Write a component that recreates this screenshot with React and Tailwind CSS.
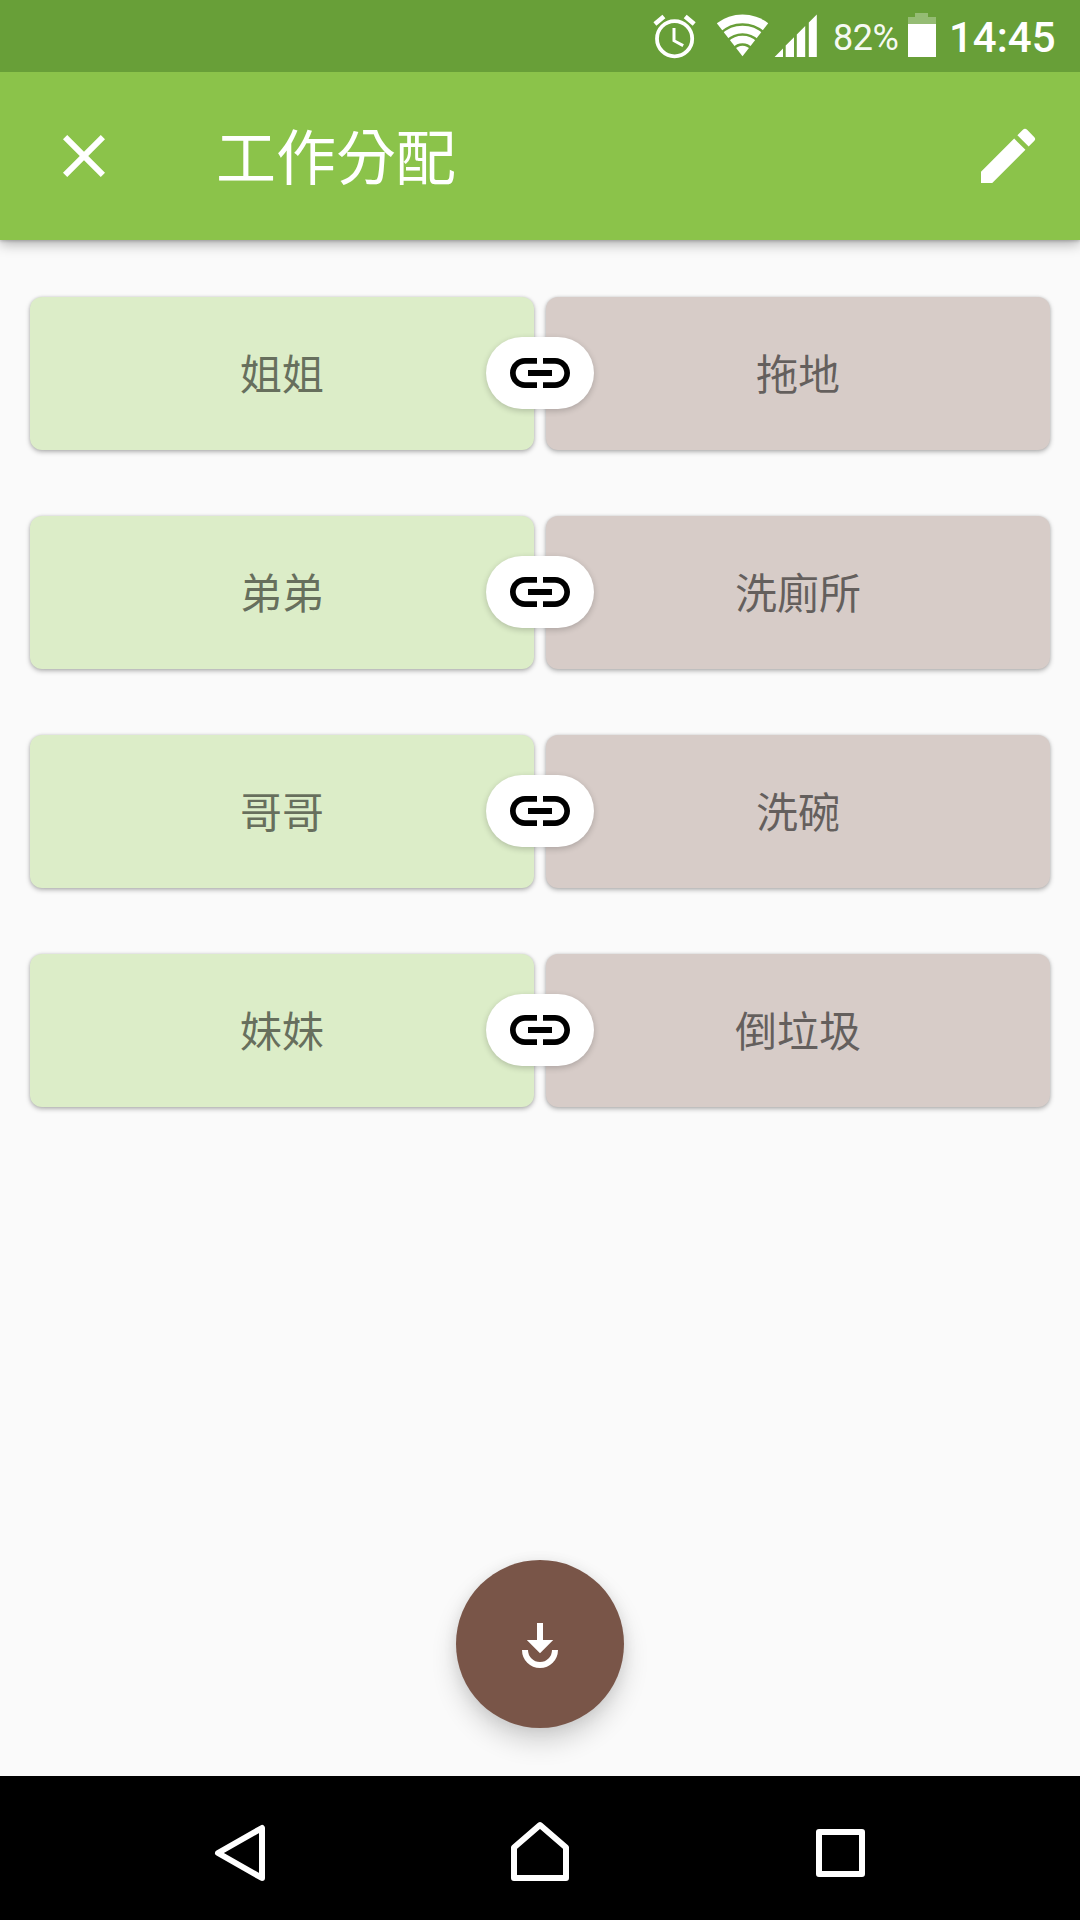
const ASSIGNMENTS = [
  { person: '姐姐', chore: '拖地' },
  { person: '弟弟', chore: '洗廁所' },
  { person: '哥哥', chore: '洗碗' },
  { person: '妹妹', chore: '倒垃圾' },
];

// 24-unit glyphs drawn at 72px
const ICONS = {
  close: 'M19 6.41L17.59 5 12 10.59 6.41 5 5 6.41 10.59 12 5 17.59 6.41 19 12 13.41 17.59 19 19 17.59 13.41 12z',
  edit: 'M3 17.25V21h3.75L17.81 9.94l-3.75-3.75L3 17.25zM20.71 7.04a.996.996 0 0 0 0-1.41l-2.34-2.34a.996.996 0 0 0-1.41 0l-1.83 1.83 3.75 3.75 1.83-1.83z',
  link: 'M3.9 12c0-1.71 1.39-3.1 3.1-3.1h4V7H7c-2.76 0-5 2.24-5 5s2.24 5 5 5h4v-1.9H7c-1.71 0-3.1-1.39-3.1-3.1zM8 13h8v-2H8v2zm9-6h-4v1.9h4c1.71 0 3.1 1.39 3.1 3.1s-1.39 3.1-3.1 3.1h-4V17h4c2.76 0 5-2.24 5-5s-2.24-5-5-5z',
  receive: 'M11 5h2v5.65h3.4L12 15.1 7.6 10.65H11zM6 14h2a4 4 0 0 0 8 0h2a6 6 0 0 1-12 0z',
};

function Icon({ d, className = '' }) {
  return (
    <svg viewBox="0 0 24 24" className={`w-[72px] h-[72px] shrink-0 ${className}`} fill="currentColor">
      <path d={d} />
    </svg>
  );
}

function AlarmIcon() {
  return (
    <svg width="48" height="72" viewBox="0 0 48 72" fill="none" stroke="white">
      <circle cx="24.6" cy="38.7" r="17.6" strokeWidth="3.8" />
      <path d="M24 28v12.7l9.2 4.9" strokeWidth="3" />
      <path d="M4.9 23.9l9-7.5M35.2 16.4l9 7.5" strokeWidth="4.6" />
    </svg>
  );
}

function WifiIcon() {
  return (
    <svg width="56" height="72" viewBox="0 0 56 72" fill="none">
      <path d="M28.5 56.3L2.8 23.3A42.3 42.3 0 0 1 54.2 23.3z" fill="white" />
      <g className="stroke-[#689f38]" strokeWidth="2.6">
        <path d="M6.5 33.3A31.8 31.8 0 0 1 50.5 33.3" />
        <path d="M13.3 40.7A21.6 21.6 0 0 1 43.7 40.7" />
        <path d="M19.8 48.5A11.5 11.5 0 0 1 37.2 48.5" />
      </g>
    </svg>
  );
}

function SignalIcon() {
  return (
    <svg width="44" height="72" viewBox="0 0 44 72" fill="white">
      <path d="M.6 57l8.4-8.4v8.4zM11.7 57V45.5l8.3-8.3v19.8zM22.8 57V34.4l8.4-8.4V57zM34.8 57V22.4l8-8v42.6z" />
    </svg>
  );
}

function BatteryIcon() {
  return (
    <svg width="28" height="72" viewBox="0 0 28 72" fill="white">
      <path d="M0 17h7v-4h13v4h8v7H0z" fillOpacity=".3" />
      <path d="M0 24h28v33H0z" />
    </svg>
  );
}

function StatusBar() {
  return (
    <div className="relative z-10 h-[72px] shrink-0 flex items-center justify-end bg-[#689f38] pr-[26px] text-white font-[Roboto,sans-serif]">
      <AlarmIcon />
      <div className="ml-4"><WifiIcon /></div>
      <div className="ml-1"><SignalIcon /></div>
      <span className="ml-[15px] w-[75px] text-[36px] leading-none pt-[3px] text-white/95 tracking-[-0.5px]">82%</span>
      <BatteryIcon />
      <span className="ml-[13px] w-[105px] text-[42px] leading-none font-medium pt-[3px] whitespace-nowrap">14:45</span>
    </div>
  );
}

function AppBar() {
  return (
    <header className="relative h-[168px] shrink-0 flex items-center bg-[#8bc34a] px-9 text-white shadow-[0_4px_12px_rgba(0,0,0,0.3),0_1px_3px_rgba(0,0,0,0.2)]">
      <button className="ml-3"><Icon d={ICONS.close} /></button>
      <h1 className="ml-24 flex-1 text-[60px] leading-none pb-[5px]">工作分配</h1>
      <button><Icon d={ICONS.edit} /></button>
    </header>
  );
}

function Card({ className, children }) {
  return (
    <div className={`flex-1 flex items-center justify-center pb-1 rounded-[12px] text-[42px] leading-none text-black/54 shadow-[0_2px_5px_rgba(0,0,0,0.28),0_0_3px_rgba(0,0,0,0.12)] ${className}`}>
      {children}
    </div>
  );
}

function AssignmentRow({ person, chore }) {
  return (
    <div className="relative flex gap-3 h-[153px]">
      <Card className="bg-[#dcedc8]">{person}</Card>
      <Card className="bg-[#d7ccc8]">{chore}</Card>
      <div className="absolute left-1/2 top-10 -translate-x-1/2 px-[18px] rounded-full bg-white text-black shadow-[0_2px_6px_rgba(0,0,0,0.2)]">
        <Icon d={ICONS.link} />
      </div>
    </div>
  );
}

function NavBar() {
  return (
    <nav className="h-[144px] shrink-0 flex items-center bg-black px-[90px]">
      {[
        'M14 41L58 16V66z',
        'M10 35.5L36 13L62 35.5V66H10z',
        'M15 20H58V62H15z',
      ].map(d => (
        <button key={d} className="flex-1 flex justify-center">
          <svg width="72" height="72" viewBox="0 0 72 72" fill="none" stroke="white" strokeWidth="6" strokeLinejoin="round">
            <path d={d} />
          </svg>
        </button>
      ))}
    </nav>
  );
}

export default function App() {
  return (
    <div className="w-[1080px] h-[1920px] flex flex-col overflow-hidden bg-[#fafafa] font-['Noto_Sans_CJK_TC',sans-serif]">
      <StatusBar />
      <AppBar />
      <main className="flex-1 flex flex-col px-[30px] pt-[57px] pb-12">
        <div className="flex flex-col gap-[66px]">
          {ASSIGNMENTS.map(a => <AssignmentRow key={a.person} {...a} />)}
        </div>
        <button className="mt-auto self-center w-[168px] h-[168px] flex items-center justify-center rounded-full bg-[#795548] text-white shadow-[0_14px_26px_rgba(0,0,0,0.16),0_2px_14px_rgba(0,0,0,0.08)]">
          <Icon d={ICONS.receive} />
        </button>
      </main>
      <NavBar />
    </div>
  );
}
